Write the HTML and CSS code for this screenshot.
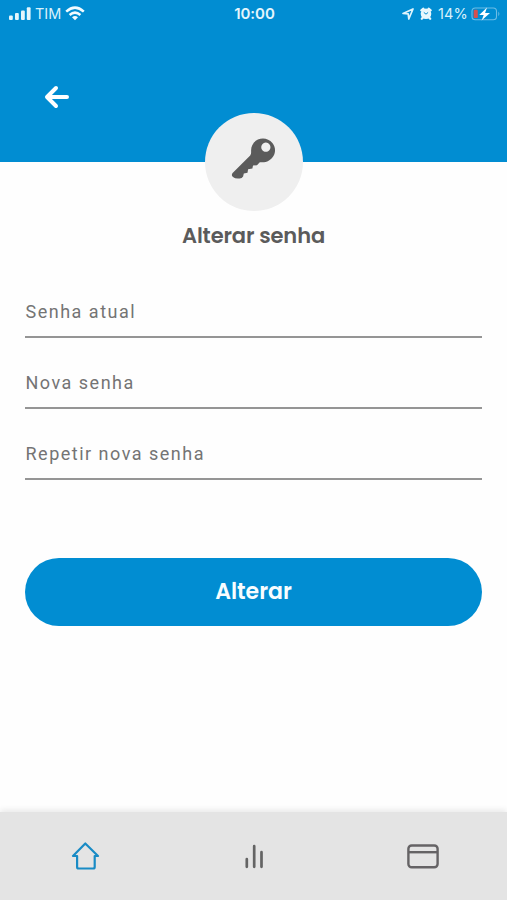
FILE: index.html
```html
<!DOCTYPE html>
<html lang="pt-BR">
<head>
<meta charset="utf-8">
<meta name="viewport" content="width=device-width, initial-scale=1">
<title>Alterar senha</title>
<link rel="stylesheet" href="styles.css">
</head>
<body>
<div class="screen">
  <header class="header">
    <div class="status">
      <div class="status-left">
        <svg width="23" height="14" viewBox="0 0 23 14" fill="#e4f5fc"><rect x="0" y="8.5" width="3.8" height="4.5" rx="1"/><rect x="6" y="6" width="3.8" height="7" rx="1"/><rect x="12" y="3.5" width="3.8" height="9.5" rx="1"/><rect x="17.8" y="0.3" width="3.8" height="12.7" rx="1"/></svg>
        <span class="carrier">TIM</span>
        <svg class="wifi" width="20" height="15" viewBox="0 0 20 15" fill="none" stroke="#f2fbff" stroke-width="2.5"><path d="M1.2 5.6Q10 -2.4 18.8 5.6M4.6 9Q10 4.3 15.4 9"/><path d="M10 14.2L7 11.2Q10 8.7 13 11.2Z" fill="#f2fbff" stroke="none"/></svg>
      </div>
      <span class="clock">10:00</span>
      <div class="status-right">
        <svg width="12" height="12" viewBox="0 0 12 12" fill="none" stroke="#dff4fc" stroke-width="1.7" stroke-linejoin="round"><path d="M1 5.5L11 1L6.8 11L6.2 5.8Z"/></svg>
        <svg class="alarm" width="12" height="13" viewBox="0 0 12 13"><circle cx="6" cy="6.8" r="5.3" fill="#e8f7fd"/><path d="M1.3 3.3L3.4 1.6M10.7 3.3L8.6 1.6M2.7 10.8L1.8 11.8M9.3 10.8l.9 1" stroke="#e8f7fd" stroke-width="2.2" stroke-linecap="round"/><path d="M3.8 5.4L6 7.2L8.1 5.4" fill="none" stroke="#038dd1" stroke-width="1"/></svg>
        <span class="percent">14%</span>
        <svg class="battery" width="30" height="14" viewBox="0 0 30 14"><rect x="1" y="1" width="24.5" height="11.8" rx="3.3" fill="none" stroke="#6dbde5" stroke-width="1.1"/><path d="M27.3 4.6Q29.5 6.9 27.3 9.2Z" fill="#6dbde5"/><rect x="2.7" y="2.7" width="4.1" height="8.4" rx="1.2" fill="#d7504d"/><path d="M16 .4L8.2 8H12.7L10.6 13.6L19 5.9H14.1Z" fill="#fff"/></svg>
      </div>
    </div>
    <a class="back" href="#" aria-label="Voltar">
      <svg width="26" height="24" viewBox="0 0 26 24" fill="none" stroke="#fff" stroke-width="4" stroke-linecap="round" stroke-linejoin="round"><path d="M12 3L3 12L12 21M3.5 12H23"/></svg>
    </a>
  </header>
  <main class="content">
    <div class="avatar">
      <svg width="98" height="98" viewBox="0 0 98 98"><path fill="#5b5b5b" fill-rule="evenodd" d="M58 25.5C51 25.5 46 31 46.1 37.5C46.1 39.6 46.3 41.2 45.2 42.4L27.6 60.1Q25.9 62.1 28 64.1Q30.2 66 34.6 65.5Q37 65.3 38.1 63.5L38.8 60.4L42.5 59.8L43.1 56.3L47.4 55.6L48 52.6L52 52.2L54.5 49.4C56 48.8 59.7 50.3 64 47.5C70.4 43.8 72 35.6 67.4 30C65 27 61.5 25.5 58 25.5ZM60.9 29.6A4.6 4.6 0 1 1 60.8 29.6Z"/></svg>
    </div>
    <h1 class="title">Alterar senha</h1>
    <form class="form">
      <label class="field"><span>Senha atual</span></label>
      <label class="field"><span>Nova senha</span></label>
      <label class="field"><span>Repetir nova senha</span></label>
      <button class="submit" type="button">Alterar</button>
    </form>
  </main>
  <nav class="tabs">
    <a class="tab" href="#" aria-label="Início"><svg width="30" height="30" viewBox="0 0 30 30" fill="none" stroke="#198bc5" stroke-width="2.2" stroke-linejoin="round" stroke-linecap="round"><path d="M15.3 2.5L28 15H24.7V26Q24.7 27.5 23.2 27.5H8.6Q7.1 27.5 7.1 26V15H3Z"/></svg></a>
    <a class="tab" href="#" aria-label="Estatísticas"><svg width="30" height="30" viewBox="0 0 30 30" fill="none" stroke="#646464" stroke-width="2.7" stroke-linecap="round"><path d="M7.8 18.2V25.8M15.2 5.2V25.8M22.5 11.2V25.8"/></svg></a>
    <a class="tab" href="#" aria-label="Cartão"><svg width="34" height="30" viewBox="0 0 34 30" fill="none" stroke="#656365" stroke-width="2.4"><rect x="2.4" y="4.5" width="29.2" height="21.8" rx="3.3"/><path d="M2.4 11.2H31.6"/></svg></a>
  </nav>
</div>
</body>
</html>
```

FILE: styles.css
```css
* { box-sizing: border-box; }
body { margin: 0; background: #fefefe; font-family: Roboto, "Liberation Sans", sans-serif; }
.screen { height: 900px; display: flex; flex-direction: column; overflow: hidden; }
svg { display: block; flex: none; }
.header { height: 162px; flex: none; background: #018dd2; }
.status { height: 28px; display: grid; grid-template-columns: 1fr auto 1fr; align-items: center; padding: 0 7px 0 9px; color: #d9f1fb; }
.status-left, .status-right { display: flex; align-items: center; }
.status-right { justify-content: flex-end; }
.carrier { margin-left: 3px; width: 26px; font: 400 14.5px/20px Inter, sans-serif; }
.wifi { margin-left: 4px; margin-top: -2px; }
.clock { font: 600 15px/20px Inter, sans-serif; letter-spacing: -.05px; color: #e4f5fc; }
.alarm { margin-left: 6px; margin-top: -1px; }
.percent { margin-left: 6px; font: 400 14.5px/20px Inter, sans-serif; width: 29px; letter-spacing: .1px; }
.battery { margin-left: 4px; margin-right: -1px; }
.back { display: block; width: 26px; margin: 57px 0 0 44px; }
.content { flex: 1; display: flex; flex-direction: column; align-items: center; }
.avatar { width: 98px; height: 98px; margin-top: -49px; border-radius: 50%; background: #efefef; }
.title { margin: 10px 0 0; font: 600 21px/30px Poppins, Inter, sans-serif; letter-spacing: -.12px; color: #5b5b5b; white-space: nowrap; }
.form { width: 457px; margin-top: 38px; }
.field { display: block; height: 71px; padding-top: 11px; }
.field span { display: block; height: 38px; padding-left: .5px; border-bottom: 2px solid #959595; font-size: 18px; line-height: 24px; letter-spacing: 1.5px; color: #747474; }
.submit { display: block; width: 457px; height: 68px; margin-top: 56px; padding: 0; border: 0; border-radius: 34px; background: #018dd2; color: #f8fdff; font: 600 22px/66px Poppins, Inter, sans-serif; }
.tabs { height: 88px; flex: none; display: grid; grid-template-columns: repeat(3, 1fr); background: #e4e4e4; box-shadow: 0 -2px 6px rgba(0, 0, 0, .09); }
.tab { display: flex; justify-content: center; padding-top: 29px; }
```
